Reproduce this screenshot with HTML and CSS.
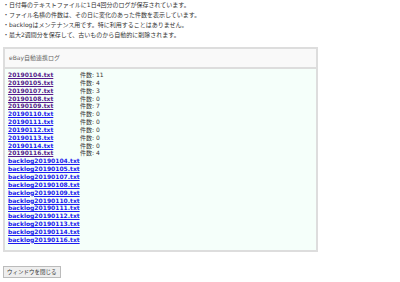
FILE: index.html
```html
<!DOCTYPE html>
<html lang="ja">
<head>
    <meta charset="UTF-8">
    <title>eBay自動連携ログ</title>
    <link rel="stylesheet" href="styles.css">
</head>
<body>
    <ul class="notes">
        <li>・日付毎のテキストファイルに1日4回分のログが保存されています。</li>
        <li>・ファイル名横の件数は、その日に変化のあった件数を表示しています。</li>
        <li>・backlogはメンテナンス用です。特に利用することはありません。</li>
        <li>・最大2週間分を保存して、古いものから自動的に削除されます。</li>
    </ul>

    <div class="log-box">
        <div class="log-title">eBay自動連携ログ</div>
        <div class="log-body">
            <div class="log-row"><a class="visited" href="#">20190104.txt</a><span>件数: 11</span></div>
            <div class="log-row"><a class="visited" href="#">20190105.txt</a><span>件数: 4</span></div>
            <div class="log-row"><a class="visited" href="#">20190107.txt</a><span>件数: 3</span></div>
            <div class="log-row"><a class="visited" href="#">20190108.txt</a><span>件数: 0</span></div>
            <div class="log-row"><a class="visited" href="#">20190109.txt</a><span>件数: 7</span></div>
            <div class="log-row"><a href="#">20190110.txt</a><span>件数: 0</span></div>
            <div class="log-row"><a href="#">20190111.txt</a><span>件数: 0</span></div>
            <div class="log-row"><a href="#">20190112.txt</a><span>件数: 0</span></div>
            <div class="log-row"><a href="#">20190113.txt</a><span>件数: 0</span></div>
            <div class="log-row"><a href="#">20190114.txt</a><span>件数: 0</span></div>
            <div class="log-row"><a class="visited" href="#">20190116.txt</a><span>件数: 4</span></div>
            <div class="log-row"><a href="#">backlog20190104.txt</a></div>
            <div class="log-row"><a href="#">backlog20190105.txt</a></div>
            <div class="log-row"><a href="#">backlog20190107.txt</a></div>
            <div class="log-row"><a href="#">backlog20190108.txt</a></div>
            <div class="log-row"><a href="#">backlog20190109.txt</a></div>
            <div class="log-row"><a href="#">backlog20190110.txt</a></div>
            <div class="log-row"><a href="#">backlog20190111.txt</a></div>
            <div class="log-row"><a href="#">backlog20190112.txt</a></div>
            <div class="log-row"><a href="#">backlog20190113.txt</a></div>
            <div class="log-row"><a href="#">backlog20190114.txt</a></div>
            <div class="log-row"><a href="#">backlog20190116.txt</a></div>
        </div>
    </div>

    <button class="close-btn">ウィンドウを閉じる</button>
</body>
</html>
```

FILE: styles.css
```css
body {
    font-family: "DejaVu Sans", Verdana, "Noto Sans CJK JP", sans-serif;
    font-size: 6px;
    color: #333;
    margin: 0;
    padding: 0 3px;
    background-color: #fff;
}
.notes {
    list-style: none;
    margin: 0;
    padding: 0;
}
.notes li {
    height: 10px;
    line-height: 10px;
}
.log-box {
    width: 311px;
    margin-top: 7px;
    border: 2px solid #ddd;
}
.log-title {
    height: 18px;
    line-height: 18px;
    padding-left: 4px;
    color: #666;
    background-color: #f9f9f9;
    border-bottom: 2px solid #ddd;
}
.log-body {
    padding: 2px 3px 6px;
    background-color: #f5fffa;
}
.log-row {
    display: grid;
    grid-template-columns: 72px auto;
    height: 7.85px;
    line-height: 7.85px;
}
.log-row a {
    color: #1a1aee;
    font-weight: bold;
}
.log-row a.visited {
    color: #551a8b;
}
.close-btn {
    display: block;
    margin-top: 14px;
    height: 12px;
    font-family: "DejaVu Sans", "Noto Sans CJK JP", sans-serif;
    font-size: 5.5px;
    line-height: 8px;
    color: #333;
    padding: 1px 3px;
    background-color: #eee;
    border: 1px solid #bbb;
    border-radius: 0;
}
```
